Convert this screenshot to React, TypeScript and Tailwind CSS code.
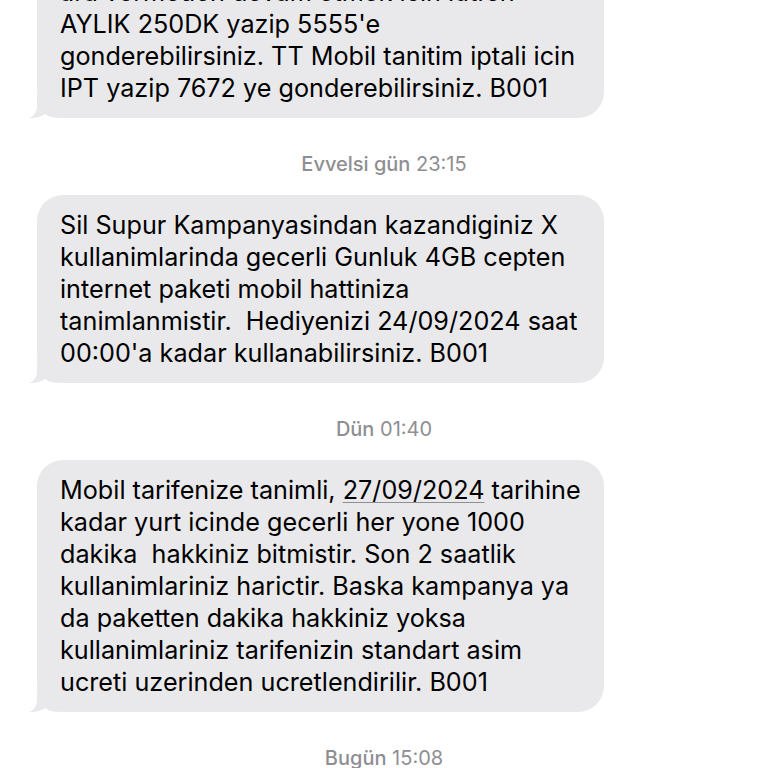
const font = { fontFamily: '"Inter", "Noto Sans", "Liberation Sans", sans-serif' };

type Msg = { stamp?: { day: string; time: string }; lines: React.ReactNode[] };

const messages: Msg[] = [
  {
    lines: [
      "ara vermeden devam etmek icin lutfen",
      "AYLIK 250DK yazip 5555'e",
      "gonderebilirsiniz. TT Mobil tanitim iptali icin",
      "IPT yazip 7672 ye gonderebilirsiniz. B001",
    ],
  },
  {
    stamp: { day: "Evvelsi gün", time: "23:15" },
    lines: [
      "Sil Supur Kampanyasindan kazandiginiz X",
      "kullanimlarinda gecerli Gunluk 4GB cepten",
      "internet paketi mobil hattiniza",
      "tanimlanmistir.\u00a0 Hediyenizi 24/09/2024 saat",
      "00:00'a kadar kullanabilirsiniz. B001",
    ],
  },
  {
    stamp: { day: "Dün", time: "01:40" },
    lines: [
      <>
        Mobil tarifenize tanimli,{" "}
        <span className="underline decoration-[#8e8e93] decoration-1 underline-offset-[3px]">27/09/2024</span>{" "}
        tarihine
      </>,
      "kadar yurt icinde gecerli her yone 1000",
      "dakika\u00a0 hakkiniz bitmistir. Son 2 saatlik",
      "kullanimlariniz harictir. Baska kampanya ya",
      "da paketten dakika hakkiniz yoksa",
      "kullanimlariniz tarifenizin standart asim",
      "ucreti uzerinden ucretlendirilir. B001",
    ],
  },
];

function Stamp({ day, time }: { day: string; time: string }) {
  return (
    <div className="mt-[34px] mb-[19px] text-center text-[20px] leading-[24px] text-[#8e8e93]">
      <span className="font-medium">{day}</span> <span>{time}</span>
    </div>
  );
}

function Bubble({ lines, first }: { lines: React.ReactNode[]; first?: boolean }) {
  return (
    <div className={`relative ml-[37px] w-[567px] ${first ? "-mt-[38px]" : ""}`}>
      <svg
        className="absolute -left-[8px] bottom-0"
        width="30"
        height="22"
        viewBox="0 0 30 22"
        aria-hidden
      >
        <path
          d="M8 0 L8 10 C8 16 5 20 0 22 C6 22.5 12 21 16 18 C19 20.5 24 22 30 22 L30 0 Z"
          fill="#e9e9eb"
        />
      </svg>
      <div className="relative rounded-[26px] bg-[#e9e9eb] px-[23px] py-[14px] text-[25.2px] leading-[32px] text-black">
        {lines.map((l, i) => (
          <div key={i} className="whitespace-nowrap">
            {l}
          </div>
        ))}
      </div>
    </div>
  );
}

export default function App() {
  return (
    <div className="h-[768px] w-[768px] overflow-hidden bg-white" style={font}>
      {messages.map((m, i) => (
        <div key={i}>
          {m.stamp && <Stamp {...m.stamp} />}
          <Bubble lines={m.lines} first={i === 0} />
        </div>
      ))}
      <Stamp day="Bugün" time="15:08" />
    </div>
  );
}
